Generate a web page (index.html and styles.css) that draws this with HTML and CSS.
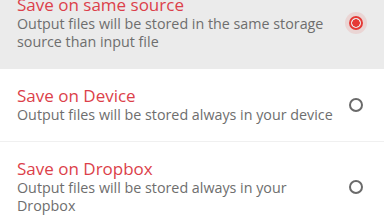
FILE: index.html
```html
<!DOCTYPE html>
<html lang="en">
<head>
    <meta charset="UTF-8">
    <title>Storage options</title>
    <link rel="stylesheet" href="styles.css">
</head>
<body>
    <div class="options">
        <div class="option selected">
            <div class="option-text">
                <div class="option-title">Save on same source</div>
                <div class="option-desc">Output files will be stored in the same storage source than input file</div>
            </div>
            <span class="radio"></span>
        </div>
        <div class="option">
            <div class="option-text">
                <div class="option-title">Save on Device</div>
                <div class="option-desc">Output files will be stored always in your device</div>
            </div>
            <span class="radio"></span>
        </div>
        <div class="option">
            <div class="option-text">
                <div class="option-title">Save on Dropbox</div>
                <div class="option-desc">Output files will be stored always in your Dropbox</div>
            </div>
            <span class="radio"></span>
        </div>
    </div>
</body>
</html>
```

FILE: styles.css
```css
body {
    margin: 0;
    padding: 0;
    background-color: #fff;
    font-family: "Open Sans", sans-serif;
    overflow: hidden;
}

.options {
    margin-top: -22px;
}

.option {
    display: flex;
    align-items: center;
    padding: 17px 21px 17px 17px;
    border-bottom: 1px solid #f0f0f0;
}

.option.selected {
    background-color: #ebebeb;
    border-bottom-color: #ebebeb;
}

.option-text {
    flex: 1;
    padding-right: 4px;
}

.option-title {
    color: #dc3f4a;
    font-size: 17px;
    line-height: 20px;
}

.option-desc {
    color: #6e6e6e;
    font-size: 14.3px;
    line-height: 18px;
}

.radio {
    width: 14px;
    height: 14px;
    border: 2px solid #6a6a6a;
    border-radius: 50%;
    box-sizing: border-box;
    flex-shrink: 0;
}

.option.selected .radio {
    border-color: #e53935;
    background: radial-gradient(circle, #e53935 0 3.5px, transparent 4px);
    box-shadow: 0 0 0 4px rgba(229, 57, 53, 0.12);
}
```
